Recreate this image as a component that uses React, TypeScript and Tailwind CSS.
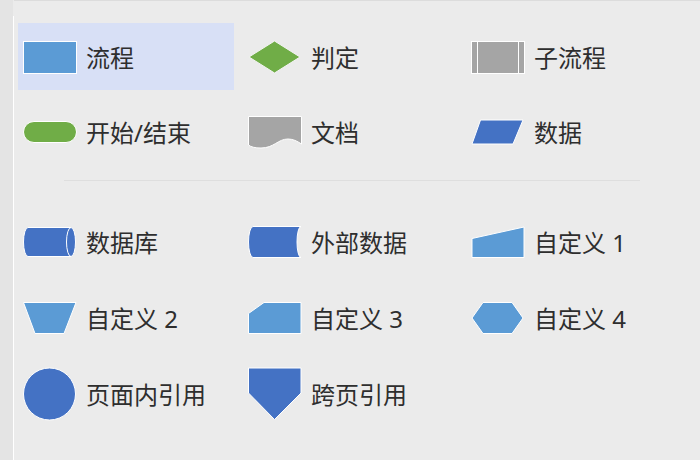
import React from 'react';

const BLUE = '#5b9bd5';
const DARK = '#4472c4';
const GREEN = '#70ad47';
const GRAY = '#a5a5a5';

// Shape glyphs, all drawn in a 54x54 box centred on y=27
const shapes: Record<string, React.ReactNode> = {
  process: <rect x="0.5" y="11.5" width="53" height="32" fill={BLUE} stroke="#fff" />,
  decision: <polygon points="1,27 26.5,11 52,27 26.5,43" fill={GREEN} stroke="#f4f4f4" />,
  subprocess: (
    <g>
      <rect x="0.5" y="11.5" width="53" height="32" fill={GRAY} stroke="#fff" />
      <line x1="6.5" y1="11.5" x2="6.5" y2="43.5" stroke="#fff" />
      <line x1="47.5" y1="11.5" x2="47.5" y2="43.5" stroke="#fff" />
    </g>
  ),
  terminator: <rect x="0.5" y="16.5" width="53" height="21" rx="10.5" fill={GREEN} stroke="#fff" />,
  document: (
    <path
      d="M0.5,11.5 H53.5 V39 C49,36 45,34 40,34 C30,34 26,43 13,43 C7,43 3,42 0.5,40 Z"
      fill={GRAY}
      stroke="#fff"
    />
  ),
  data: <polygon points="1,39 9.5,15 52,15 42,39" fill={DARK} stroke="#fff" />,
  database: (
    <g>
      <path d="M5,12.5 H48 A4.5,14.5 0 0 1 48,41.5 H5 A4.5,14.5 0 0 1 5,12.5 Z" fill={DARK} stroke="#fff" />
      <path d="M48,12.5 A4.5,14.5 0 0 0 48,41.5" fill="none" stroke="#fff" />
    </g>
  ),
  external: <path d="M5,11.5 H53 A4,15.5 0 0 0 53,42.5 H5 A4.5,15.5 0 0 1 5,11.5 Z" fill={DARK} stroke="#fff" />,
  custom1: <polygon points="1,23.5 53,12 53,42.5 1,42.5" fill={BLUE} stroke="#fff" />,
  custom2: <polygon points="0.5,11.5 53,11.5 41,42.5 12,42.5" fill={BLUE} stroke="#fff" />,
  custom3: <polygon points="0.5,22.5 16,11.5 53,11.5 53,42.5 0.5,42.5" fill={BLUE} stroke="#fff" />,
  custom4: <polygon points="1,27 12,11.5 41,11.5 52,27 41,42.5 12,42.5" fill={BLUE} stroke="#fff" />,
  circle: <circle cx="26.5" cy="27" r="26" fill={DARK} stroke="#fff" />,
  offpage: <polygon points="0.5,1 53,1 53,26 26.5,52.5 0.5,26" fill={DARK} stroke="#fff" />,
};

const Item = ({ shape, label, active }: { shape: string; label: string; active?: boolean }) => (
  <div className={`flex items-center h-[67px] w-[216px] pl-[5px] ${active ? 'bg-[#d8e0f6]' : ''}`}>
    <svg width="54" height="54" viewBox="0 0 54 54" className="shrink-0">
      {shapes[shape]}
    </svg>
    <span className="ml-[9px] mt-[2px] text-[24px] text-[#2e2e2e] leading-none">{label}</span>
  </div>
);

export default function App() {
  return (
    <div
      className="w-[700px] h-[460px] flex bg-[#ebebeb] overflow-hidden"
      style={{ fontFamily: '"Noto Sans", "Noto Sans CJK SC", sans-serif' }}
    >
      <div className="w-[13px] bg-[#e4e4e4]" />
      <div className="w-px bg-white mt-4" />
      <div className="flex-1 border-t border-[#dcdcdc] pl-[4px] pt-[22px]">
        <div className="grid grid-cols-[225px_223px_225px] gap-y-[8px]">
          <Item shape="process" label="流程" active />
          <Item shape="decision" label="判定" />
          <Item shape="subprocess" label="子流程" />
          <Item shape="terminator" label="开始/结束" />
          <Item shape="document" label="文档" />
          <Item shape="data" label="数据" />
        </div>

        <div className="mt-[15px] ml-[46px] w-[576px] h-px bg-[#dedede]" />

        <div className="mt-[27px] grid grid-cols-[225px_223px_225px] gap-y-[9px]">
          <Item shape="database" label="数据库" />
          <Item shape="external" label="外部数据" />
          <Item shape="custom1" label="自定义 1" />
          <Item shape="custom2" label="自定义 2" />
          <Item shape="custom3" label="自定义 3" />
          <Item shape="custom4" label="自定义 4" />
          <Item shape="circle" label="页面内引用" />
          <Item shape="offpage" label="跨页引用" />
        </div>
      </div>
    </div>
  );
}
